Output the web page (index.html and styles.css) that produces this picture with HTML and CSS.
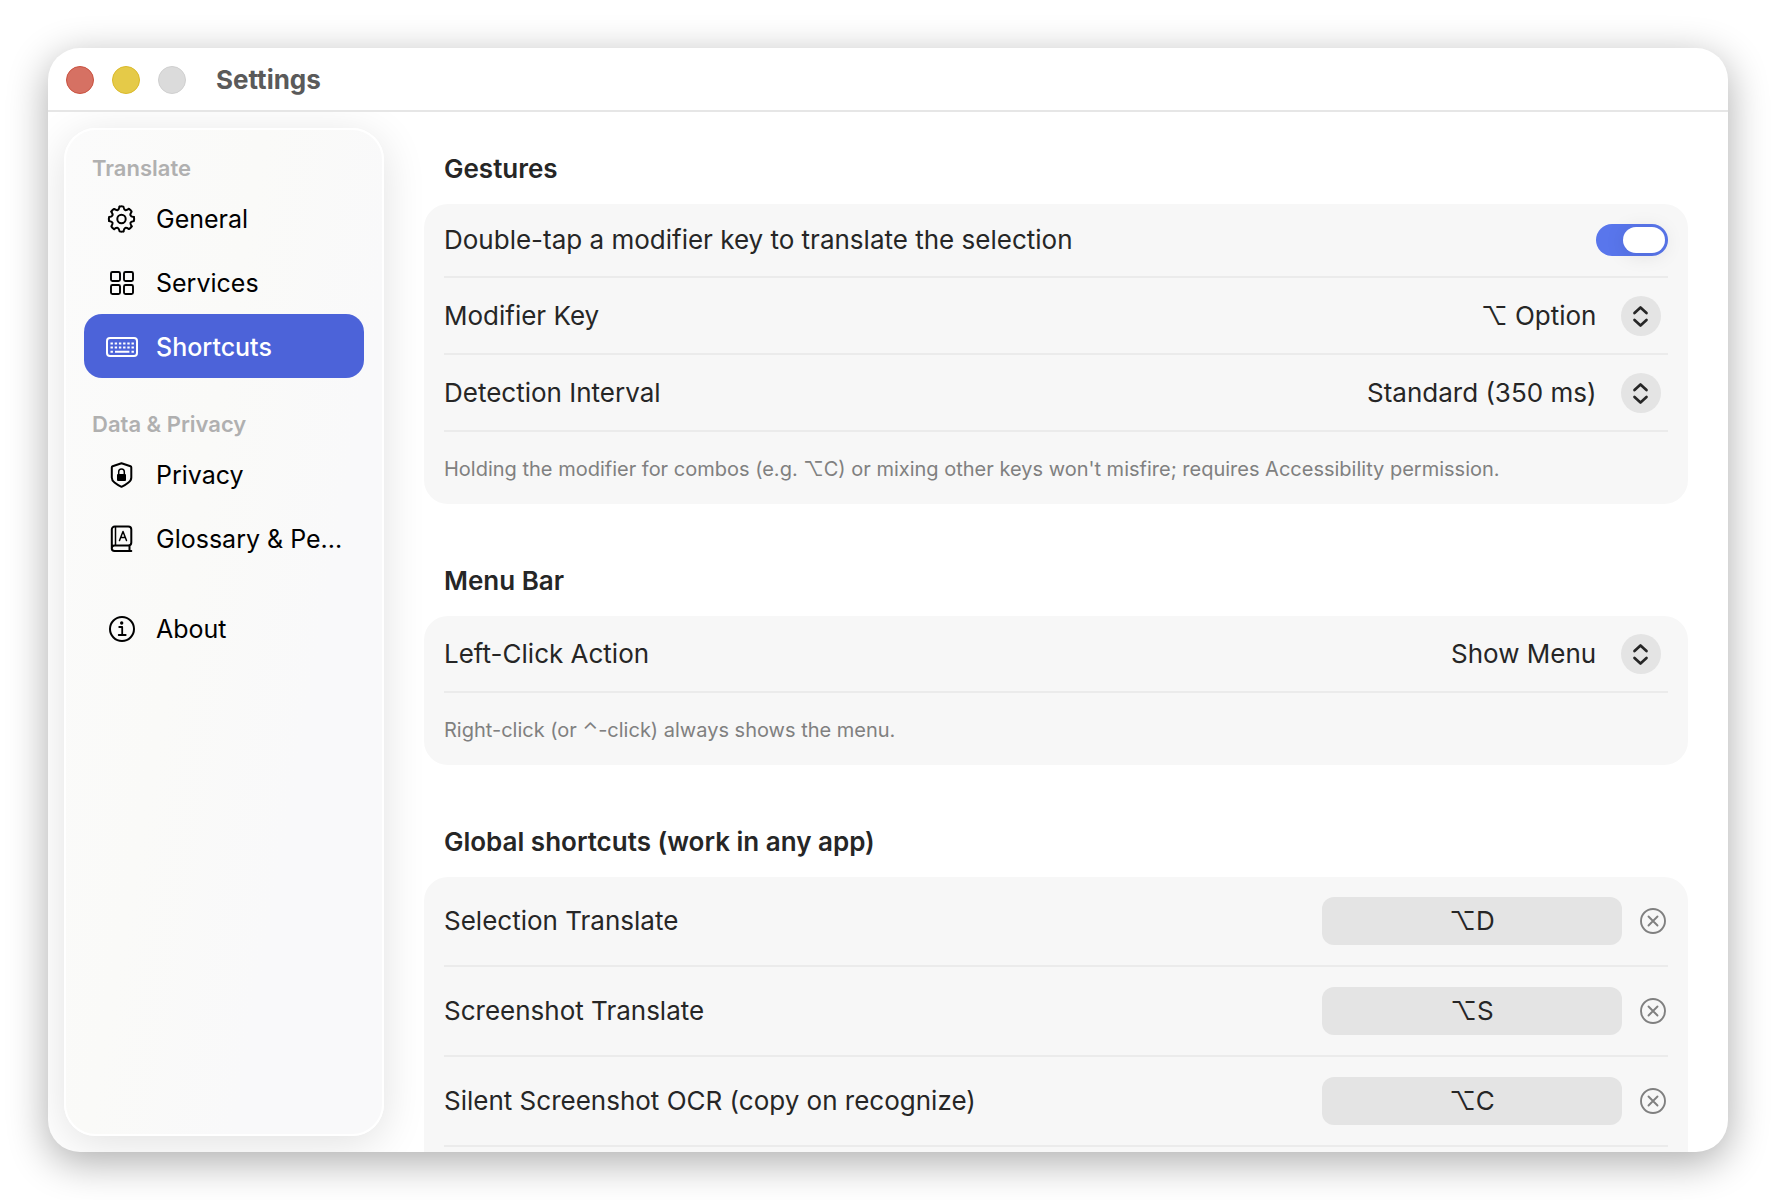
FILE: index.html
```html
<!DOCTYPE html>
<html lang="en">
<head>
<meta charset="utf-8">
<meta name="viewport" content="width=device-width, initial-scale=1">
<title>Settings</title>
<link rel="stylesheet" href="styles.css">
</head>
<body>
<svg class="symbols" aria-hidden="true">
  <symbol id="chevrons" viewBox="0 0 40 40"><path d="M13.5 17 19.5 11.5 25.500 17M13.500 24 19.500 29.500 25.500 24" fill="none" stroke="currentColor" stroke-width="2.700" stroke-linecap="round" stroke-linejoin="round"/></symbol>
  <symbol id="clear" viewBox="0 0 28 28"><circle cx="14" cy="14" r="12" fill="none" stroke="currentColor" stroke-width="1.900"/><path d="M9.500 9.500 18.500 18.500M18.500 9.500 9.500 18.500" stroke="currentColor" stroke-width="1.900" stroke-linecap="round"/></symbol>
</svg>
<div class="window">
  <header class="titlebar">
    <div class="lights">
      <button class="light light-close" aria-label="Close"></button>
      <button class="light light-minimize" aria-label="Minimize"></button>
      <button class="light light-zoom" aria-label="Zoom" disabled></button>
    </div>
    <h1 class="title">Settings</h1>
  </header>
  <div class="body">
    <nav class="sidebar">
      <h2 class="nav-heading">Translate</h2>
      <a class="nav-item" href="#general">
        <svg class="nav-icon" viewBox="0 0 32 32" fill="none" stroke="currentColor" stroke-width="2" stroke-linecap="round" stroke-linejoin="round">
          <g transform="translate(15.500 16)">
            <path id="tooth" d="M-1.900-12.400Q0-12.900 1.900-12.400C2.700-8.500 4.100-7.920 7.350-10.180"/>
            <use href="#tooth" transform="rotate(45)"/><use href="#tooth" transform="rotate(90)"/><use href="#tooth" transform="rotate(135)"/><use href="#tooth" transform="rotate(180)"/><use href="#tooth" transform="rotate(225)"/><use href="#tooth" transform="rotate(270)"/><use href="#tooth" transform="rotate(315)"/>
            <circle r="4.200"/>
          </g>
        </svg>
        <span class="nav-label">General</span>
      </a>
      <a class="nav-item" href="#services">
        <svg class="nav-icon" viewBox="0 0 32 32" fill="none" stroke="currentColor" stroke-width="1.900"><rect x="5" y="5" width="9" height="9" rx="1.500"/><rect x="18" y="5" width="9" height="9" rx="1.500"/><rect x="5" y="18" width="9" height="9" rx="1.500"/><rect x="18" y="18" width="9" height="9" rx="1.500"/></svg>
        <span class="nav-label">Services</span>
      </a>
      <a class="nav-item is-selected" href="#shortcuts" aria-current="page">
        <svg class="nav-icon" viewBox="0 0 32 32" fill="none" stroke="currentColor" stroke-width="2"><rect x="1" y="7" width="30" height="18" rx="3"/><path d="M4.500 12.500H28M4.500 16.500H28" stroke-dasharray="2.400 1.800"/><path d="M4.500 20.800h2.400M9 20.800h14.400M25.500 20.800h2.400"/></svg>
        <span class="nav-label">Shortcuts</span>
      </a>
      <h2 class="nav-heading">Data &amp; Privacy</h2>
      <a class="nav-item" href="#privacy">
        <svg class="nav-icon" viewBox="0 0 32 32" fill="none" stroke="currentColor" stroke-width="2" stroke-linejoin="round"><path d="M15.500 4.200 24.500 7.300Q25.300 7.600 25.300 8.500V18.500Q25.300 21.500 22.500 23.500 19.500 26 15.500 27.800 11.500 26 8.500 23.500 5.800 21.500 5.800 18.500V8.500Q5.800 7.600 6.600 7.300Z"/><rect x="11" y="15" width="9" height="7" rx="1" fill="currentColor" stroke="none"/><path d="M12.700 15.500V12.800a2.800 2.800 0 0 1 5.600 0V15.500" stroke-width="1.500"/></svg>
        <span class="nav-label">Privacy</span>
      </a>
      <a class="nav-item" href="#glossary">
        <svg class="nav-icon" viewBox="0 0 32 32" fill="none" stroke="currentColor" stroke-width="2" stroke-linecap="round" stroke-linejoin="round"><path d="M5.800 24.500V6.500a3 3 0 0 1 3-3H22.300a3 3 0 0 1 3 3V19.500a3 3 0 0 1-3 3H8.500a2.700 2.700 0 0 0 0 5.500H25.300M23.500 22.500V28"/><path d="M9.500 4V22M13.500 17.500 17 8.500 20.500 17.500M14.700 14.500H19.300" stroke-width="1.500"/></svg>
        <span class="nav-label">Glossary &amp; Pe...</span>
      </a>
      <a class="nav-item nav-item-apart" href="#about">
        <svg class="nav-icon" viewBox="0 0 32 32" fill="none" stroke="currentColor" stroke-width="2"><circle cx="16" cy="16" r="12"/><circle cx="15.700" cy="10" r="1.700" fill="currentColor" stroke="none"/><path d="M13.200 14h3v8M12.700 22h7" stroke-width="1.800" stroke-linecap="round" stroke-linejoin="round"/></svg>
        <span class="nav-label">About</span>
      </a>
    </nav>
    <main class="content">
      <section class="group">
        <h2 class="group-title">Gestures</h2>
        <div class="card">
          <div class="row row-switch">
            <label for="double-tap">Double-tap a modifier key to translate the selection</label>
            <input class="switch" id="double-tap" type="checkbox" role="switch" checked>
          </div>
          <div class="row">
            <label for="modifier">Modifier Key</label>
            <div class="picker">
              <select id="modifier"><option>⌥ Option</option></select>
              <svg class="picker-icon" aria-hidden="true"><use href="#chevrons"/></svg>
            </div>
          </div>
          <div class="row">
            <label for="interval">Detection Interval</label>
            <div class="picker">
              <select id="interval"><option>Standard (350 ms)</option></select>
              <svg class="picker-icon" aria-hidden="true"><use href="#chevrons"/></svg>
            </div>
          </div>
          <p class="row note">Holding the modifier for combos (e.g. ⌥C) or mixing other keys won't misfire; requires Accessibility permission.</p>
        </div>
      </section>
      <section class="group">
        <h2 class="group-title">Menu Bar</h2>
        <div class="card">
          <div class="row">
            <label for="left-click">Left-Click Action</label>
            <div class="picker">
              <select id="left-click"><option>Show Menu</option></select>
              <svg class="picker-icon" aria-hidden="true"><use href="#chevrons"/></svg>
            </div>
          </div>
          <p class="row note">Right-click (or ⌃-click) always shows the menu.</p>
        </div>
      </section>
      <section class="group">
        <h2 class="group-title">Global shortcuts (work in any app)</h2>
        <div class="card card-open">
          <div class="row row-tall">
            <label for="key-selection">Selection Translate</label>
            <div class="recorder">
              <button class="key" id="key-selection">⌥D</button>
              <button class="clear" aria-label="Clear Selection Translate"><svg><use href="#clear"/></svg></button>
            </div>
          </div>
          <div class="row row-tall">
            <label for="key-screenshot">Screenshot Translate</label>
            <div class="recorder">
              <button class="key" id="key-screenshot">⌥S</button>
              <button class="clear" aria-label="Clear Screenshot Translate"><svg><use href="#clear"/></svg></button>
            </div>
          </div>
          <div class="row row-tall">
            <label for="key-ocr">Silent Screenshot OCR (copy on recognize)</label>
            <div class="recorder">
              <button class="key" id="key-ocr">⌥C</button>
              <button class="clear" aria-label="Clear Silent Screenshot OCR"><svg><use href="#clear"/></svg></button>
            </div>
          </div>
        </div>
      </section>
    </main>
  </div>
</div>
</body>
</html>
```

FILE: styles.css
```css
* { box-sizing: border-box; }

body {
  margin: 0;
  height: 100vh;
  padding: 48px;
  overflow: hidden;
  background: #fff;
  color: #262626;
  font-family: Inter, "Noto Sans", sans-serif;
  font-size: 26px;
  line-height: 30px;
}

h1, h2, p { margin: 0; font-size: inherit; }
button, select { border: 0; padding: 0; background: none; color: inherit; font: inherit; }
.symbols { position: absolute; width: 0; height: 0; }

.window {
  display: flex;
  flex-direction: column;
  height: 100%;
  overflow: hidden;
  border-radius: 32px;
  background: #fff;
  box-shadow: 0 10px 40px rgba(0, 0, 0, .33);
}

/* Title bar */
.titlebar {
  display: flex;
  flex: none;
  align-items: center;
  gap: 30px;
  height: 64px;
  padding: 2px 18px 0;
  border-bottom: 2px solid #e6e6e6;
}
.lights { display: flex; gap: 18px; }
.light { width: 28px; height: 28px; border: 1px solid; border-radius: 50%; }
.light-close { background: #d67163; border-color: #c9513f; }
.light-minimize { background: #e5ca48; border-color: #dab92a; }
.light-zoom { background: #dbdbdb; border-color: #cfcfcf; }
.title { color: #5a5a5a; font-weight: 700; }

.body { display: flex; flex: 1; min-height: 0; overflow: hidden; }

/* Sidebar */
.sidebar {
  position: relative;
  z-index: 1;
  flex: none;
  width: 320px;
  margin: 16px 0 16px 16px;
  padding: 20px 18px;
  border: 2px solid #fff;
  border-radius: 32px;
  background: linear-gradient(100deg, #fbfbfb, #fafaf8 40%, #f9f9fa 70%);
  box-shadow: 0 8px 44px rgba(0, 0, 0, .12);
  font-size: 25px;
}
.nav-heading {
  padding: 6px 8px;
  color: #b0b0b0;
  font-size: 22px;
  font-weight: 600;
  line-height: 24px;
}
.nav-item + .nav-heading { padding-top: 34px; }
.nav-item {
  display: flex;
  align-items: center;
  gap: 18px;
  height: 64px;
  padding: 2px 18px 0 22px;
  border-radius: 18px;
  color: #000;
  text-decoration: none;
}
.nav-item-apart { margin-top: 26px; }
.nav-item.is-selected { background: #4c63d9; color: #fff; font-weight: 500; }
.nav-icon { flex: none; width: 32px; height: 32px; }
.nav-label { white-space: nowrap; }

/* Settings form */
.content {
  display: flex;
  flex: 1;
  flex-direction: column;
  gap: 62px;
  min-width: 0;
  padding: 42px 40px 0;
}
.group-title { margin: 0 20px 20px; font-weight: 600; }
.card { padding: 0 20px; border-radius: 24px; background: #f7f7f7; }
.row {
  display: flex;
  align-items: center;
  justify-content: space-between;
  min-height: 77px;
  border-bottom: 2px solid #ebebeb;
}
.row-switch { min-height: 74px; }
.row-tall { min-height: 90px; }
.note { min-height: 72px; padding-top: 2px; border-bottom: 0; color: #808080; font-size: 20px; }
.card-open { padding-bottom: 40px; }

.switch {
  display: flex;
  align-items: center;
  justify-content: flex-end;
  width: 72px;
  height: 32px;
  margin: 0;
  padding: 3px;
  border-radius: 16px;
  background: #5976ec;
  appearance: none;
}
.switch::before {
  width: 42px;
  height: 26px;
  border-radius: 13px;
  background: #fff;
  box-shadow: 0 2px 20px rgba(0, 0, 0, .1);
  content: "";
}
.switch:not(:checked) { justify-content: flex-start; background: #d8d8d8; }

.picker { display: grid; align-items: center; justify-items: end; padding-right: 7px; }
.picker select { grid-area: 1 / 1; height: 40px; padding-right: 64px; appearance: none; }
.picker-icon {
  grid-area: 1 / 1;
  width: 40px;
  height: 40px;
  border-radius: 50%;
  background: #e4e4e4;
  pointer-events: none;
}

.recorder { display: flex; align-items: center; gap: 17px; }
.key { width: 300px; height: 48px; border-radius: 12px; background: #e4e4e4; }
.clear { display: flex; width: 28px; height: 28px; margin-right: 1px; color: #808080; }
.clear svg { width: 28px; height: 28px; }
```
